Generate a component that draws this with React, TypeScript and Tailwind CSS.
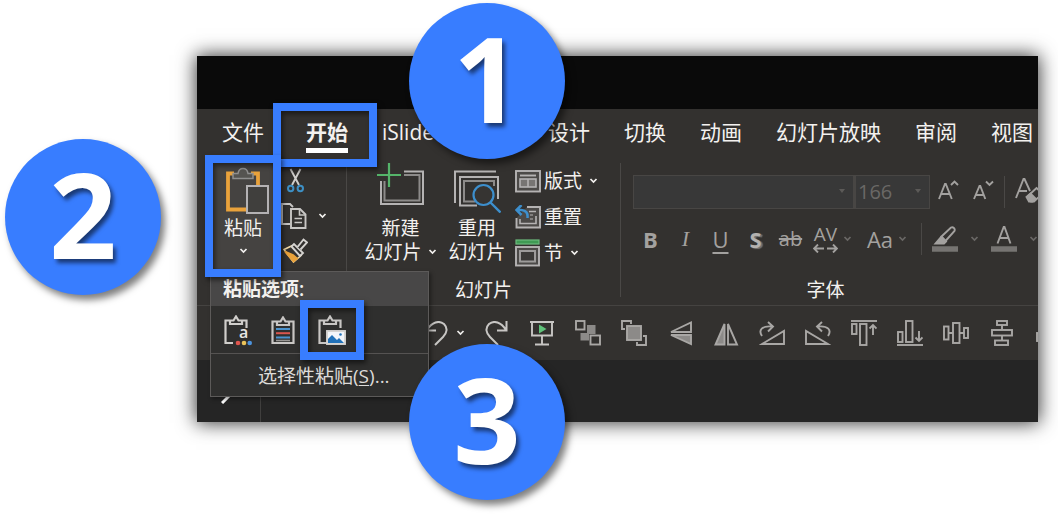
import type { ReactNode } from "react";

type IconProps = { w: number; h: number; children: ReactNode; className?: string };

function Icon({ w, h, children, className = "" }: IconProps) {
  return (
    <svg
      width={w}
      height={h}
      viewBox={`0 0 ${w} ${h}`}
      fill="none"
      stroke="currentColor"
      strokeWidth={1.9}
      aria-hidden="true"
      className={`shrink-0 ${className}`}
    >
      {children}
    </svg>
  );
}

function Chevron({ className = "" }: { className?: string }) {
  return (
    <Icon w={9} h={6} className={className}>
      <path d="M1.500 1l3 3 3-3" strokeWidth="1.700" />
    </Icon>
  );
}

/* Clipboard group */

function PasteIcon() {
  return (
    <Icon w={44} h={47}>
      <path d="M9 6.5H3v36h18M26 6.5h7V18" stroke="#e9a23b" strokeWidth="3.800" />
      <path
        d="M8 11.5V6.500h5C13.500 3 15.500 1.500 18 1.500s4.500 1.500 5 5h5v5z"
        fill="#555451"
        stroke="#8f8f8f"
        strokeWidth="1.5"
      />
      <rect x="22" y="19" width="21" height="27" fill="#403f3d" stroke="#b4b2b4" strokeWidth="2" />
    </Icon>
  );
}

function CutIcon() {
  return (
    <Icon w={17} h={25}>
      <path d="M3.500 1L12 17M13.500 1L5 17" stroke="#d0cecb" />
      <circle cx="3.700" cy="20.500" r="2.700" stroke="#3d8fc4" strokeWidth="2" />
      <circle cx="13.300" cy="20.500" r="2.700" stroke="#3d8fc4" strokeWidth="2" />
    </Icon>
  );
}

function CopyIcon() {
  return (
    <Icon w={26} h={26} className="text-[#c8c6c4]">
      <path d="M9 21H1V1h8l3 3" />
      <path d="M10 6h9l5.500 5.500V25H10z" fill="#33312f" />
      <path d="M18.500 6v6h6M13.500 15.500H21M13.500 19.500H21" strokeWidth="1.600" />
    </Icon>
  );
}

function BrushIcon() {
  return (
    <Icon w={25} h={25}>
      <path d="M1 11.500L8.500 8l9.500 9.500-7.500 6.500z" fill="#33312f" stroke="#f3d9a4" strokeWidth="1.600" />
      <path d="M2 13.500l8 3.500 4 3.500-3.500 3z" fill="#e9a23b" stroke="#e9a23b" />
      <path d="M8.500 8.500L11 6l9 9-3 3z" fill="#33312f" stroke="#d5d3d0" />
      <path d="M14.500 9l6-7.500 3.500 3-6.500 7" fill="#33312f" stroke="#d5d3d0" />
    </Icon>
  );
}

/* Slides group */

function NewSlideIcon() {
  return (
    <Icon w={47} h={50} className="text-[#b5b3b3]">
      <path d="M27 8.500h19v32.500H4V18" strokeWidth="2" />
      <path d="M27 12h15.500v25.500H7.500V18" strokeWidth="2" stroke="#8d8b8a" />
      <path d="M12 0v24M0 12h24" stroke="#55b46a" strokeWidth="2.200" />
    </Icon>
  );
}

function ReuseSlideIcon() {
  return (
    <Icon w={47} h={50} className="text-[#b5b3b3]">
      <path d="M1 40V8.500h41" strokeWidth="2" />
      <path d="M23 42.500H6V14h38v22" strokeWidth="2" />
      <path d="M21 38.500H10V18h30v5" stroke="#8d8b8a" strokeWidth="2" />
      <circle cx="29.500" cy="32" r="10" fill="#363432" stroke="#3d8fcd" strokeWidth="2.200" />
      <path d="M36.500 39.500L46.500 49.500" stroke="#3d8fcd" strokeWidth="2.400" />
    </Icon>
  );
}

function LayoutIcon() {
  return (
    <Icon w={26} h={23} className="text-[#b5b3b3]">
      <rect x="1" y="1" width="24" height="20.500" fill="#4c4a48" />
      <path d="M5 5.500h16" />
      <rect x="5" y="9" width="16" height="8" fill="#777573" strokeWidth="1.600" />
      <path d="M13 9v8" strokeWidth="1.600" />
    </Icon>
  );
}

function ResetIcon() {
  return (
    <Icon w={26} h={24} className="text-[#b5b3b3]">
      <path d="M1.500 13v9.500H25V2H12" fill="#4c4a48" />
      <path d="M14 6.500h7M5 14v4.500h16V11" strokeWidth="1.600" />
      <path d="M15 10h3M15 14h3" strokeWidth="1.200" />
      <path d="M6.500 0L1.500 5l5 5M2 5h4c5 0 7 3 6.500 8" stroke="#3d8fcd" strokeWidth="2.500" />
    </Icon>
  );
}

function SectionIcon() {
  return (
    <Icon w={26} h={28} className="text-[#b5b3b3]">
      <rect x="1" y="1" width="23" height="4" fill="#3f9a54" stroke="#6cba7d" strokeWidth="1.200" />
      <rect x="1" y="8" width="23" height="18.500" fill="#4c4a48" />
      <rect x="5" y="12" width="15" height="10.500" strokeWidth="2" stroke="#9d9b9a" fill="#3b3937" />
    </Icon>
  );
}

/* Font group */

function ClearFormatIcon() {
  return (
    <Icon w={30} h={26} className="text-[#a3a19f]">
      <path d="M1 21L8.500 2h1L15 14M4 14h8" />
      <path d="M13 19l8.500-8 6 5.500-8.500 8h-3z" fill="#33312f" />
      <path d="M11.500 20l4-3.500 5 5-3 3H14z" fill="#a3a19f" />
    </Icon>
  );
}

function HighlightIcon() {
  return (
    <Icon w={26} h={26} className="text-[#a3a19f]">
      <path d="M9.500 10.500L19 1.500c2-1 4.500 1 3.500 3.500l-9 10z" />
      <path d="M9 11l5 4.500-2 2H3.500z" fill="#a3a19f" />
      <path d="M0 23h26" strokeWidth="5.500" stroke="#767472" />
    </Icon>
  );
}

function FontColorIcon() {
  return (
    <Icon w={26} h={26} className="text-[#a3a19f]">
      <path d="M6.500 17.500L12.700 1h.8l6 16.500M8.500 12h9" />
      <path d="M0 23h26" strokeWidth="5.500" stroke="#767472" />
    </Icon>
  );
}

/* Quick access toolbar */

const arrange: { label: string; icon: ReactNode }[] = [
  {
    label: "从头开始",
    icon: (
      <Icon w={24} h={26} className="text-[#c8c6c4]">
        <path d="M0 2h24M2 2v13.500h20V2M12 15.500V24M5 24.500h14" />
        <path d="M9 4.500l7.500 4.500L9 13.500z" fill="#5fc27a" stroke="none" />
      </Icon>
    ),
  },
  {
    label: "组合",
    icon: (
      <Icon w={26} h={26}>
        <path d="M12 5h8.500v9H14v6.500H5.500V13H12z" fill="#8c8a88" stroke="none" />
        <rect x="1" y="1" width="8.500" height="8.500" fill="#33312f" />
        <rect x="15.500" y="15.500" width="9.500" height="9" fill="#33312f" />
      </Icon>
    ),
  },
  {
    label: "上移一层",
    icon: (
      <Icon w={26} h={26}>
        <path d="M4 9H1V1h9v3M22 16h3v9h-9v-3" />
        <rect x="6" y="6" width="14" height="14" fill="#8c8a88" />
      </Icon>
    ),
  },
  {
    label: "垂直翻转",
    icon: (
      <Icon w={25} h={25}>
        <path d="M3 11L23 1.500V11z" />
        <path d="M3 14l20 9V14z" fill="#8c8a88" />
      </Icon>
    ),
  },
  {
    label: "水平翻转",
    icon: (
      <Icon w={25} h={25}>
        <path d="M10.500 3v20.500H1.500z" fill="#8c8a88" />
        <path d="M14 3v20.500h9z" />
      </Icon>
    ),
  },
  {
    label: "向右旋转",
    icon: (
      <Icon w={26} h={25}>
        <path d="M3 23h22V10z" />
        <path d="M3 15C-1 9 3 4.500 13 5.500M9 1l5 4.500-5 5" />
      </Icon>
    ),
  },
  {
    label: "向左旋转",
    icon: (
      <Icon w={26} h={25}>
        <path d="M23 23H1V10z" />
        <path d="M23 15c4-6 0-10.500-10-9.500M17 1l-5 4.500 5 5" />
      </Icon>
    ),
  },
  {
    label: "顶端对齐",
    icon: (
      <Icon w={26} h={26}>
        <path d="M0 1h26" />
        <rect x="1" y="4" width="4.500" height="10" />
        <rect x="9" y="4" width="6.500" height="21" />
        <path d="M22 15V5M18.500 8.500L22 5l3.500 3.500" />
      </Icon>
    ),
  },
  {
    label: "底端对齐",
    icon: (
      <Icon w={26} h={26}>
        <path d="M0 25h26" />
        <rect x="1" y="12" width="4.500" height="10" />
        <rect x="9" y="1" width="6.500" height="21" />
        <path d="M22 11v10M18.500 17.500L22 21l3.500-3.500" />
      </Icon>
    ),
  },
  {
    label: "横向分布",
    icon: (
      <Icon w={26} h={24}>
        <rect x="1" y="5.500" width="4.500" height="13" />
        <rect x="10" y="2" width="6.500" height="20" />
        <rect x="21" y="7" width="4" height="10" />
        <path d="M5.500 12H10M16.500 12H21" />
      </Icon>
    ),
  },
  {
    label: "纵向分布",
    icon: (
      <Icon w={22} h={26}>
        <rect x="6" y="1" width="10" height="4" />
        <rect x="1" y="10" width="20" height="5.500" />
        <rect x="4" y="20.500" width="13" height="4.500" />
        <path d="M11 5v5M11 15.500v5" />
      </Icon>
    ),
  },
  {
    label: "对齐",
    icon: (
      <Icon w={24} h={24}>
        <rect x="1" y="12" width="5" height="8" />
        <rect x="12" y="4" width="8" height="16" />
      </Icon>
    ),
  },
];

/* Paste options menu */

const clipOutline = "M6 5.500H1.500V28H9M18 5.500h4.500V13M6 9V5.500h3.500L12 1.500l2.500 4H18V9z";

function KeepTextIcon() {
  return (
    <Icon w={28} h={31} className="text-[#d0cecb]">
      <path d={clipOutline} strokeWidth="2.200" />
      <text
        x="15"
        y="23"
        fill="#e8e6e4"
        stroke="none"
        className="font-['Open_Sans'] text-[16px] font-semibold"
      >
        a
      </text>
      <circle cx="14" cy="28" r="2.300" fill="#e0564e" stroke="none" />
      <circle cx="20" cy="28" r="2.300" fill="#ebc45a" stroke="none" />
      <circle cx="25.700" cy="28" r="2.300" fill="#4c93dd" stroke="none" />
    </Icon>
  );
}

function DestinationThemeIcon() {
  return (
    <Icon w={24} h={29} className="text-[#c8c6c4]">
      <path d="M6 5.500H1.500V27h21V5.500H18M6 9V5.500h3.500L12 1.500l2.500 4H18V9z" strokeWidth="2.200" />
      <path d="M5 13h14M5 21.500h14" stroke="#4c93cd" strokeWidth="2" />
      <path d="M5 17.200h14" stroke="#d9564e" strokeWidth="2" />
      <path d="M5 24.500h14" stroke="#9a9896" strokeWidth="1.500" />
    </Icon>
  );
}

function PictureIcon() {
  return (
    <Icon w={28} h={31} className="text-[#c8c6c4]">
      <path d={clipOutline} strokeWidth="2.200" />
      <rect x="9" y="16" width="18" height="13" fill="#f3f6fa" stroke="#d5d3d0" />
      <path d="M10 28v-4l4-4 5 5 2-2 5 5z" fill="#2272b9" stroke="none" />
      <circle cx="22.500" cy="19.500" r="1.300" fill="#2272b9" stroke="none" />
    </Icon>
  );
}

function Highlight({ className }: { className: string }) {
  return (
    <span
      aria-hidden="true"
      className={`pointer-events-none absolute z-20 border-8 border-[#387dff] shadow-[2px_3px_5px_rgba(0,0,0,0.55),inset_2px_3px_5px_rgba(0,0,0,0.5)] ${className}`}
    />
  );
}

function Step({ n, className }: { n: number; className: string }) {
  return (
    <div
      className={`absolute z-30 size-[156px] rounded-full bg-[#387dff] text-center font-['Open_Sans',sans-serif] text-[118px] leading-[150px] font-bold text-white shadow-[4px_5px_7px_rgba(0,0,0,0.5)] [text-shadow:3px_4px_4px_rgba(0,0,0,0.55)] ${className}`}
    >
      {n}
    </div>
  );
}

function PasteMenu() {
  return (
    <div
      role="menu"
      className="absolute top-[116px] left-[13px] z-10 w-[219px] border border-[#5c5a59] bg-[#2f2f2e] shadow-[2px_2px_4px_rgba(0,0,0,0.4)]"
    >
      <div className="bg-[#484747] pl-3 leading-[34px] font-semibold">粘贴选项:</div>
      <div className="relative flex h-12 items-center gap-[19px] border-b border-[#555352] pt-0.5 pl-[13px]">
        <button role="menuitem" aria-label="保留源格式">
          <KeepTextIcon />
        </button>
        <button role="menuitem" aria-label="使用目标主题">
          <DestinationThemeIcon />
        </button>
        <button role="menuitem" aria-label="图片" className="ml-1">
          <PictureIcon />
        </button>
        <Highlight className="-top-[6px] left-[89px] h-[60px] w-16" />
      </div>
      <button role="menuitem" className="block w-full pt-0.5 pl-[47px] text-left leading-10 text-[#dddbd9]">
        选择性粘贴(<u className="underline-offset-2">S</u>)...
      </button>
    </div>
  );
}

function Group({ label, className, children }: { label?: string; className: string; children: ReactNode }) {
  return (
    <section className={`flex flex-col ${className}`}>
      <div className="flex h-[123px] items-start">{children}</div>
      <h2 className="h-[27px] text-center leading-6">{label}</h2>
    </section>
  );
}

function Divider({ className }: { className: string }) {
  return <div className={`w-px shrink-0 bg-[#4a4846] ${className}`} />;
}

const toolBtn = "flex h-9 w-[35px] shrink-0 items-center justify-center";

export default function App() {
  return (
    <main className="relative bg-white pt-14 pr-5 pb-[92px] pl-[197px] font-['Open_Sans','Noto_Sans_CJK_SC',sans-serif] text-[19px] text-[#f3f1ef]">
      <div className="shadow-[0_0_18px_1px_rgba(0,0,0,0.8)]">
        <div className="relative overflow-hidden bg-[#33312f]">
          <header className="h-[53px] bg-[#0a0a0a]" />

          <nav className="flex h-[46px] items-start gap-[34px] pl-[25px] text-[21px] leading-[46px] whitespace-nowrap">
            <a href="#file">文件</a>
            <a href="#home" aria-current="page" className="relative ml-2 h-[46px] font-bold">
              开始
              <span className="absolute right-0 bottom-[2px] left-0 h-[5px] bg-white" />
              <Highlight className="-top-[6px] -left-[33px] h-16 w-[104px]" />
            </a>
            <a href="#islide" className="w-[132px]">iSlide</a>
            <a href="#design">设计</a>
            <a href="#transitions">切换</a>
            <a href="#animations">动画</a>
            <a href="#slideshow">幻灯片放映</a>
            <a href="#review">审阅</a>
            <a href="#view">视图</a>
          </nav>

          <div className="relative flex border-b border-[#454341]">
            <Group className="w-[149px] shrink-0 pl-4">
              <button className="relative mt-2 flex h-[106px] w-[60px] flex-col items-center bg-[#454341] pt-1">
                <span className="pl-2">
                  <PasteIcon />
                </span>
                <span className="mt-0.5 leading-6">粘贴</span>
                <Chevron className="mt-2" />
                <Highlight className="-inset-2" />
              </button>
              <div className="mt-2 ml-2 flex flex-col">
                <button aria-label="剪切" className="flex h-[35px] w-7 items-center justify-center">
                  <CutIcon />
                </button>
                <button aria-label="复制" className="flex h-[35px] items-center gap-[9px]">
                  <span className="w-7">
                    <CopyIcon />
                  </span>
                  <Chevron />
                </button>
                <button aria-label="格式刷" className="flex h-[35px] w-7 items-center justify-center">
                  <BrushIcon />
                </button>
              </div>
            </Group>
            <PasteMenu />

            <Divider className="my-2" />

            <Group label="幻灯片" className="w-[273px] shrink-0">
              <button className="mt-2 ml-[15px] flex w-[77px] flex-col items-center leading-6">
                <NewSlideIcon />
                <span className="mt-[3px]">新建</span>
                <span className="flex items-center gap-1.5 whitespace-nowrap">
                  幻灯片
                  <Chevron />
                </span>
              </button>
              <button className="mt-2 ml-2 flex w-[60px] flex-col items-center leading-6">
                <ReuseSlideIcon />
                <span className="mt-[3px]">重用</span>
                <span>幻灯片</span>
              </button>
              <div className="mt-2 ml-2 flex flex-col">
                <button className="flex h-9 items-center gap-[3px]">
                  <LayoutIcon />
                  版式
                  <Chevron className="ml-1" />
                </button>
                <button className="flex h-9 items-center gap-[3px]">
                  <ResetIcon />
                  重置
                </button>
                <button className="flex h-9 items-center gap-[3px]">
                  <SectionIcon />
                  节
                  <Chevron className="ml-1" />
                </button>
              </div>
            </Group>

            <Divider className="my-2" />

            <Group label="字体" className="min-w-0 flex-1 pr-2">
              <div className="pt-5 pl-3 text-[#a3a19f]">
                <div className="flex h-[34px] items-center">
                  <div className="relative">
                    <select
                      aria-label="字体名称"
                      className="block h-[34px] w-[221px] appearance-none border border-[#484644] bg-[#383838]"
                    />
                    <Icon w={8} h={5} className="absolute top-[14px] right-2 text-[#5c5a58]">
                      <path d="M1 0h6L4 4z" fill="currentColor" stroke="none" />
                    </Icon>
                  </div>
                  <div className="relative">
                    <select
                      aria-label="字号"
                      className="block h-[34px] w-[76px] appearance-none border border-l-2 border-[#484644] bg-[#383838] pl-0.5 text-[20px] leading-8 text-[#6a6866]"
                    >
                      <option>166</option>
                    </select>
                    <Icon w={8} h={5} className="absolute top-[14px] right-2 text-[#5c5a58]">
                      <path d="M1 0h6L4 4z" fill="currentColor" stroke="none" />
                    </Icon>
                  </div>
                  <button aria-label="增大字号" className={toolBtn}>
                    <Icon w={22} h={22} className="mb-1">
                      <path d="M2 20L8 5h.8l6 15M4 15h9M14 6l3.500-3.500L21 6" />
                    </Icon>
                  </button>
                  <button aria-label="减小字号" className={toolBtn}>
                    <Icon w={22} h={22} className="mb-1">
                      <path d="M2 20L7.500 7h.8l5 13M4 16h8M14 2.500L17.500 6 21 2.500" />
                    </Icon>
                  </button>
                  <Divider className="ml-1 h-8" />
                  <button aria-label="清除格式" className="mb-1 ml-2.5 shrink-0">
                    <ClearFormatIcon />
                  </button>
                </div>

                <div className="mt-3 flex h-9 items-center text-[22px] leading-9">
                  <button className={`${toolBtn} font-bold`}>B</button>
                  <button className={`${toolBtn} font-['Liberation_Serif',serif] italic`}>I</button>
                  <button className={`${toolBtn} underline underline-offset-4`}>U</button>
                  <button className={`${toolBtn} font-bold text-[#b3b1af] [text-shadow:2px_1px_1px_#767472]`}>S</button>
                  <button className={`${toolBtn} text-[20px] line-through`}>ab</button>
                  <button aria-label="字符间距" className={`${toolBtn} flex-col`}>
                    <span className="text-[19px] leading-4">AV</span>
                    <Icon w={25} h={9} className="mt-0.5">
                      <path d="M11 4.500H1M5 .5l-4 4 4 4M14 4.500h10M20 .5l4 4-4 4" />
                    </Icon>
                  </button>
                  <Chevron className="text-[#6a6866]" />
                  <button className="ml-2.5 w-9 shrink-0">Aa</button>
                  <Chevron className="text-[#6a6866]" />
                  <Divider className="ml-3.5 h-8" />
                  <button aria-label="突出显示" className="ml-2.5 shrink-0">
                    <HighlightIcon />
                  </button>
                  <Chevron className="ml-3 text-[#6a6866]" />
                  <button aria-label="字体颜色" className="ml-3 shrink-0">
                    <FontColorIcon />
                  </button>
                  <Chevron className="ml-3 text-[#6a6866]" />
                </div>
              </div>
            </Group>
          </div>

          <div className="flex h-[54px] items-center pl-[228px] text-[#a9a7a5]">
            <button aria-label="撤消" className="shrink-0 text-[#c8c6c4]">
              <Icon w={23} h={25}>
                <path d="M1.500 0v9.500H11M2 9C7 1 14-1 19 3c4 4 3 9-1 13l-8 8" strokeWidth="2" />
              </Icon>
            </button>
            <Chevron className="ml-2 text-[#efedeb]" />
            <button aria-label="恢复" className="ml-5 shrink-0 text-[#c8c6c4]">
              <Icon w={23} h={25}>
                <path d="M21.500 0v9.500H12M21 9C16 1 9-1 4 3c-4 4-3 9 1 13l8 8" strokeWidth="2" />
              </Icon>
            </button>
            <div className="ml-[11px] flex">
              {arrange.map((a) => (
                <button
                  key={a.label}
                  aria-label={a.label}
                  className="flex w-[46px] shrink-0 items-center justify-center"
                >
                  {a.icon}
                </button>
              ))}
            </div>
          </div>

          <div className="flex h-[62px] bg-[#252525]">
            <aside className="flex w-16 items-end border-r border-[#403f3e] pb-[18px] pl-6">
              <Icon w={12} h={12} className="text-white">
                <path d="M1 11L10 2" strokeWidth="3" />
              </Icon>
            </aside>
          </div>
        </div>
      </div>

      <Step n={1} className="top-[3px] left-[409px]" />
      <Step n={2} className="top-[139px] left-[5px]" />
      <Step n={3} className="top-[344px] left-[409px]" />
    </main>
  );
}
